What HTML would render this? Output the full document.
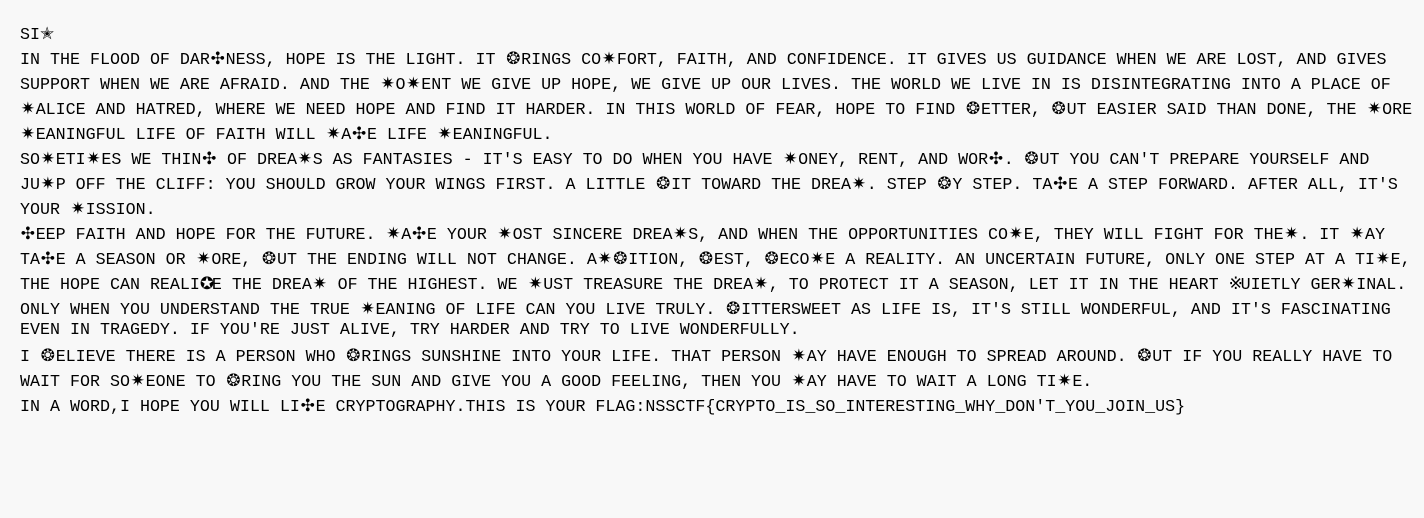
<!DOCTYPE html>
<html><head><meta charset="utf-8"><style>
html,body{margin:0;padding:0;background:#f8f8f8;width:1424px;height:518px;overflow:hidden}
.l{position:absolute;left:20px;height:22px;line-height:22px;font-family:"Liberation Mono","DejaVu Sans Mono",monospace;font-size:16.67px;color:#000;white-space:pre;letter-spacing:0}
.s{display:inline-block;width:15.7px;text-align:center;font-family:"DejaVu Sans","Noto Sans CJK SC",sans-serif;font-size:17px;line-height:22px;overflow:visible;color:#000}
.n{width:12px}
</style></head><body>
<div class="l" style="top:23px">SI✭</div>
<div class="l" style="top:48px">IN THE FLOOD OF DAR✣NESS, HOPE IS THE LIGHT. IT ❂RINGS CO✷FORT, FAITH, AND CONFIDENCE. IT GIVES US GUIDANCE WHEN WE ARE LOST, AND GIVES</div>
<div class="l" style="top:73px">SUPPORT WHEN WE ARE AFRAID. AND THE ✷O✷ENT WE GIVE UP HOPE, WE GIVE UP OUR LIVES. THE WORLD WE LIVE IN IS DISINTEGRATING INTO A PLACE OF</div>
<div class="l" style="top:98px">✷ALICE AND HATRED, WHERE WE NEED HOPE AND FIND IT HARDER. IN THIS WORLD OF FEAR, HOPE TO FIND ❂ETTER, ❂UT EASIER SAID THAN DONE, THE ✷ORE</div>
<div class="l" style="top:123px">✷EANINGFUL LIFE OF FAITH WILL ✷A✣E LIFE ✷EANINGFUL.</div>
<div class="l" style="top:148px">SO✷ETI✷ES WE THIN✣ OF DREA✷S AS FANTASIES - IT'S EASY TO DO WHEN YOU HAVE ✷ONEY, RENT, AND WOR✣. ❂UT YOU CAN'T PREPARE YOURSELF AND</div>
<div class="l" style="top:173px">JU✷P OFF THE CLIFF: YOU SHOULD GROW YOUR WINGS FIRST. A LITTLE ❂IT TOWARD THE DREA✷. STEP ❂Y STEP. TA✣E A STEP FORWARD. AFTER ALL, IT'S</div>
<div class="l" style="top:198px">YOUR ✷ISSION.</div>
<div class="l" style="top:223px">✣EEP FAITH AND HOPE FOR THE FUTURE. ✷A✣E YOUR ✷OST SINCERE DREA✷S, AND WHEN THE OPPORTUNITIES CO✷E, THEY WILL FIGHT FOR THE✷. IT ✷AY</div>
<div class="l" style="top:248px">TA✣E A SEASON OR ✷ORE, ❂UT THE ENDING WILL NOT CHANGE. A✷❂ITION, ❂EST, ❂ECO✷E A REALITY. AN UNCERTAIN FUTURE, ONLY ONE STEP AT A TI✷E,</div>
<div class="l" style="top:273px">THE HOPE CAN REALI✪E THE DREA✷ OF THE HIGHEST. WE ✷UST TREASURE THE DREA✷, TO PROTECT IT A SEASON, LET IT IN THE HEART ※UIETLY GER✷INAL.</div>
<div class="l" style="top:298px">ONLY WHEN YOU UNDERSTAND THE TRUE ✷EANING OF LIFE CAN YOU LIVE TRULY. ❂ITTERSWEET AS LIFE IS, IT'S STILL WONDERFUL, AND IT'S FASCINATING</div>
<div class="l" style="top:320px">EVEN IN TRAGEDY. IF YOU'RE JUST ALIVE, TRY HARDER AND TRY TO LIVE WONDERFULLY.</div>
<div class="l" style="top:345px">I ❂ELIEVE THERE IS A PERSON WHO ❂RINGS SUNSHINE INTO YOUR LIFE. THAT PERSON ✷AY HAVE ENOUGH TO SPREAD AROUND. ❂UT IF YOU REALLY HAVE TO</div>
<div class="l" style="top:370px">WAIT FOR SO✷EONE TO ❂RING YOU THE SUN AND GIVE YOU A GOOD FEELING, THEN YOU ✷AY HAVE TO WAIT A LONG TI✷E.</div>
<div class="l" style="top:395px">IN A WORD,I HOPE YOU WILL LI✣E CRYPTOGRAPHY.THIS IS YOUR FLAG:NSSCTF{CRYPTO_IS_SO_INTERESTING_WHY_DON'T_YOU_JOIN_US}</div>
<script>
document.querySelectorAll('.l').forEach(function(d){
  d.innerHTML=d.textContent.replace(/[^\x00-\x7f]/g,function(c){var n=(c=='※'||c=='✪'||c=='✭')?' n':'';return '<span class="s'+n+'">'+c+'</span>';});
});
</script>
</body></html>
